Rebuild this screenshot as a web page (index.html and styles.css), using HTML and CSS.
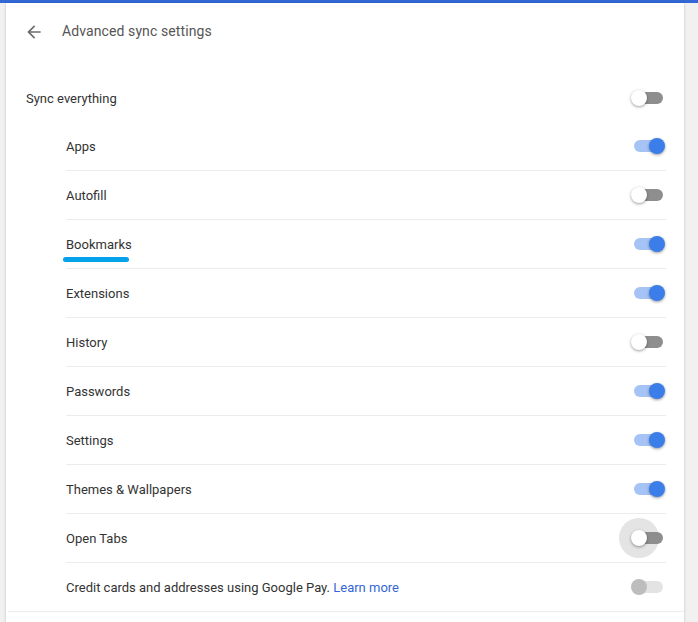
FILE: index.html
```html
<!DOCTYPE html>
<html>
<head>
<meta charset="utf-8">
<link rel="stylesheet" href="styles.css">
</head>
<body>
<div class="topbar"></div>
<div class="page">
  <div class="card">
    <div class="header">
      <svg class="back" viewBox="0 0 24 24" width="20" height="20"><path d="M20 11H7.83l5.59-5.59L12 4l-8 8 8 8 1.41-1.41L7.83 13H20v-2z" fill="#6e6e6e"/></svg>
      <div class="title">Advanced sync settings</div>
    </div>
    <div class="row main">
      <div class="label">Sync everything</div>
      <span class="toggle"><span class="track"></span><span class="knob"></span></span>
    </div>
    <div class="sublist">
      <div class="row sub"><div class="label">Apps</div><span class="toggle on"><span class="track"></span><span class="knob"></span></span></div>
      <div class="row sub"><div class="label">Autofill</div><span class="toggle"><span class="track"></span><span class="knob"></span></span></div>
      <div class="row sub"><div class="label marked">Bookmarks<span class="mark"></span></div><span class="toggle on"><span class="track"></span><span class="knob"></span></span></div>
      <div class="row sub"><div class="label">Extensions</div><span class="toggle on"><span class="track"></span><span class="knob"></span></span></div>
      <div class="row sub"><div class="label">History</div><span class="toggle"><span class="track"></span><span class="knob"></span></span></div>
      <div class="row sub"><div class="label">Passwords</div><span class="toggle on"><span class="track"></span><span class="knob"></span></span></div>
      <div class="row sub"><div class="label">Settings</div><span class="toggle on"><span class="track"></span><span class="knob"></span></span></div>
      <div class="row sub"><div class="label">Themes &amp; Wallpapers</div><span class="toggle on"><span class="track"></span><span class="knob"></span></span></div>
      <div class="row sub"><div class="label">Open Tabs</div><span class="toggle focus"><span class="ripple"></span><span class="track"></span><span class="knob"></span></span></div>
      <div class="row sub"><div class="label">Credit cards and addresses using Google Pay. <a class="link">Learn more</a></div><span class="toggle disabled"><span class="track"></span><span class="knob"></span></span></div>
    </div>
    <div class="section-end"></div>
  </div>
</div>
</body>
</html>
```
FILE: styles.css
```css
html, body {
  margin: 0;
  padding: 0;
  background: #f1f1f1;
  font-family: Roboto, "Liberation Sans", sans-serif;
  font-size: 13px;
  color: #333;
  overflow: hidden;
}
.topbar {
  height: 3px;
  background: #3367d6;
}
.page {
  padding-left: 6px;
  width: 678px;
}
.card {
  background: #fff;
  box-shadow: 0 0 2px rgba(0,0,0,0.14), 0 1px 4px rgba(0,0,0,0.08);
  height: 640px;
}
.header {
  height: 56px;
  display: flex;
  align-items: center;
  padding-left: 18px;
}
.back {
  display: block;
  margin-right: 18px;
  margin-top: 2px;
}
.title {
  font-size: 14px;
  color: #555;
  font-weight: 400;
  letter-spacing: 0.1px;
}
.row {
  display: flex;
  align-items: center;
  justify-content: space-between;
  height: 48px;
}
.main {
  margin-top: 15px;
  padding: 0 19px 0 20px;
}
.sublist {
  padding: 0 18px 0 60px;
}
.sub + .sub {
  border-top: 1px solid #ececec;
}
.sub {
  padding-right: 1px;
}
.label {
  position: relative;
}
.mark {
  position: absolute;
  left: -3px;
  top: 20px;
  width: 66px;
  height: 5px;
  border-radius: 3px;
  background: #03a2eb;
}
.link {
  color: #3367d6;
  text-decoration: none;
}
.toggle {
  position: relative;
  width: 34px;
  height: 16px;
  display: block;
}
.track {
  position: absolute;
  left: 3px;
  top: 2px;
  width: 29px;
  height: 12px;
  border-radius: 6px;
  background: #8e8e8e;
}
.knob {
  position: absolute;
  left: 0;
  top: 0;
  width: 16px;
  height: 16px;
  border-radius: 50%;
  background: #fff;
  box-shadow: 0 1px 3px rgba(0,0,0,0.4);
}
.toggle.on .track {
  background: #a6c3f6;
}
.toggle.on .knob {
  left: 18px;
  background: #3b7eea;
}
.toggle.disabled .track {
  background: #e3e3e3;
}
.toggle.disabled .knob {
  background: #bdbdbd;
  box-shadow: none;
}
.ripple {
  position: absolute;
  left: -12px;
  top: -12px;
  width: 40px;
  height: 40px;
  border-radius: 50%;
  background: #e4e4e4;
}
.section-end {
  border-top: 1px solid #ececec;
  margin-left: 2px;
}
```
